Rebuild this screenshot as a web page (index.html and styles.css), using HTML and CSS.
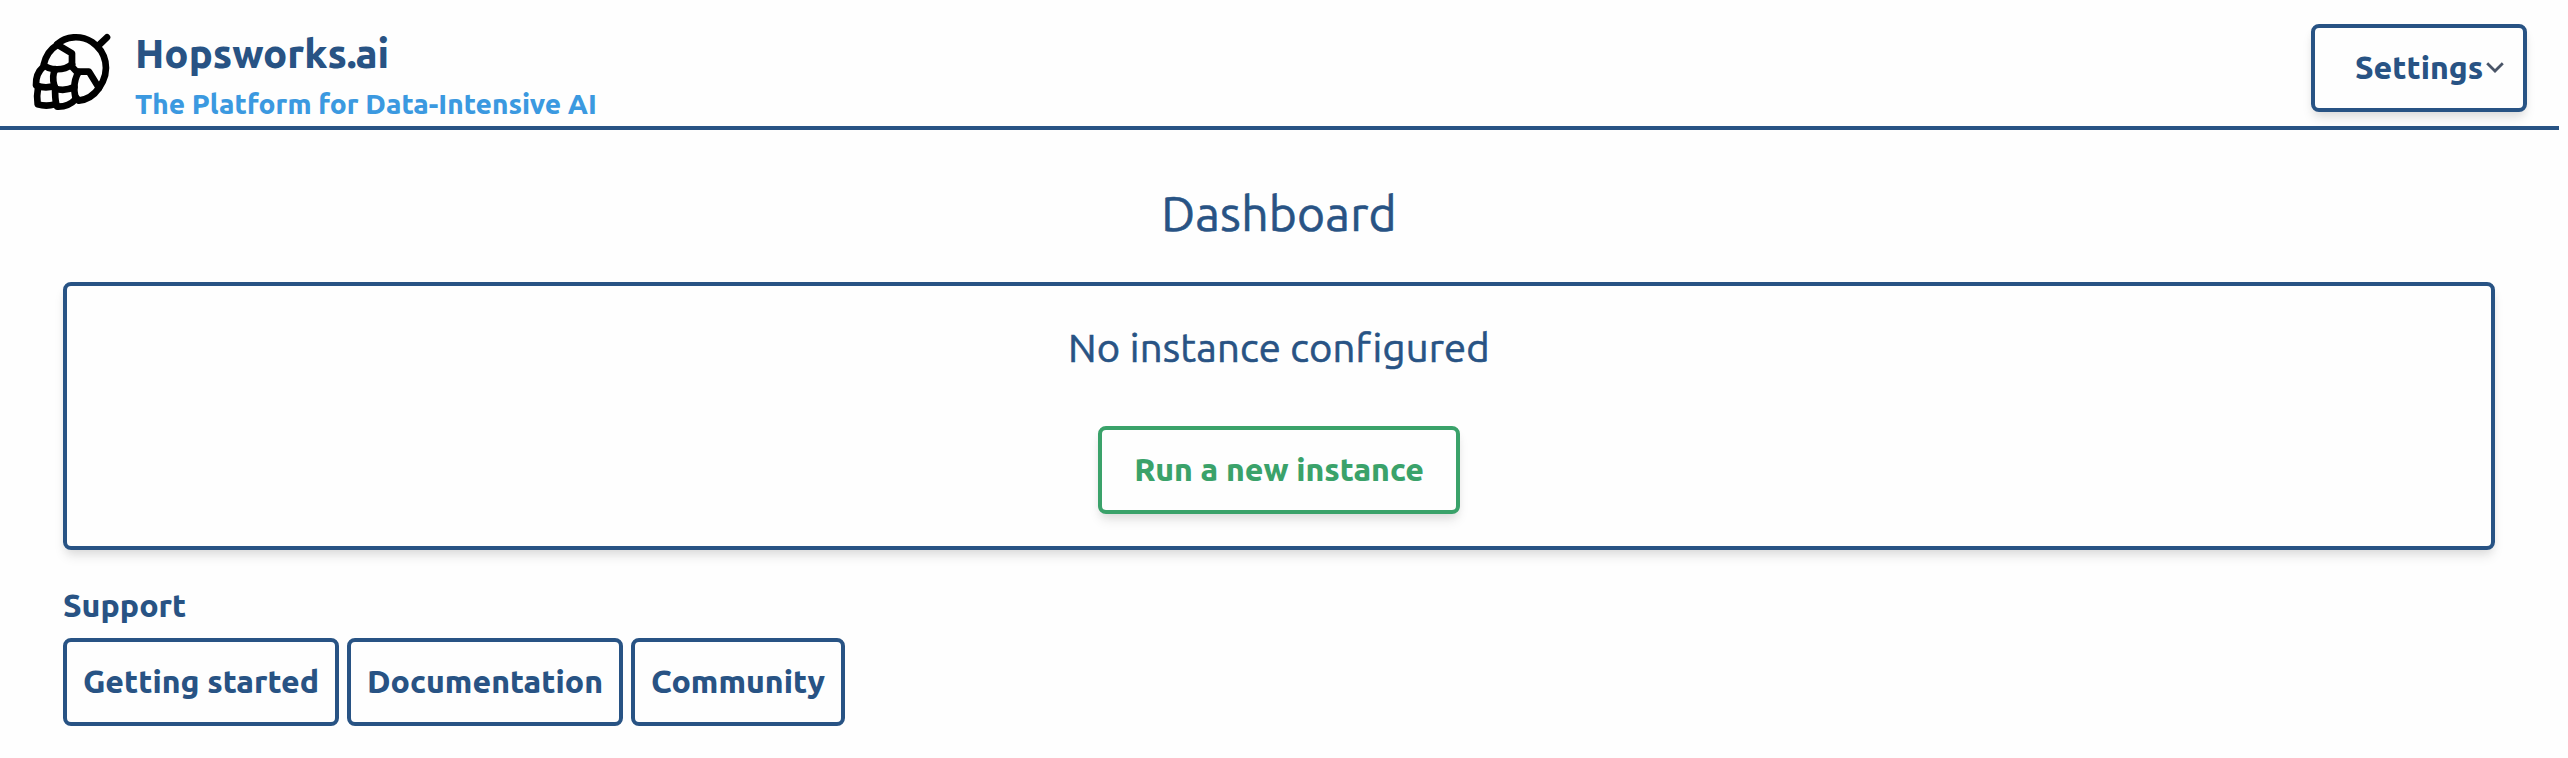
FILE: index.html
```html
<!DOCTYPE html>
<html lang="en">
<head>
<meta charset="utf-8">
<title>Hopsworks.ai</title>
<link rel="stylesheet" href="styles.css">
</head>
<body>
<div class="page">
  <header class="header">
    <div class="brand">
      <svg class="logo" viewBox="0 0 330 330" fill="none" stroke="#000" stroke-width="20" stroke-linecap="round" stroke-linejoin="round">
        <path d="M112 72C138 49 181 44 216 66C257 94 275 150 237 204"/>
        <path d="M234 78L261 52"/>
        <path d="M112 74L156 100L156 140L170 155L207 155L237 204C222 226 201 239 176 242L168 232"/>
        <path d="M110 76C90 88 77 108 71 134C85 150 129 155 156 133"/>
        <path d="M70 140C54 154 47 174 48 196C68 204 90 202 103 198C97 176 99 160 106 148"/>
        <path d="M54 204C50 224 51 240 53 253C70 258 88 258 104 253"/>
        <path d="M105 202C106 225 104 240 111 260C134 261 154 252 167 238C166 226 162 215 163 204C163 184 168 169 176 156"/>
        <path d="M105 206C128 213 147 209 163 201"/>
      </svg>
      <div>
        <div class="brand-name">Hopsworks.ai</div>
        <div class="brand-tagline">The Platform for Data-Intensive AI</div>
      </div>
    </div>
    <button class="button settings">Settings<svg class="chevron" viewBox="0 0 18 12" fill="none" stroke="#4a5568" stroke-width="2.8"><path d="M1.2 1.3L9 9L16.8 1.3"/></svg></button>
  </header>
  <main class="main">
    <h1 class="title">Dashboard</h1>
    <section class="panel">
      <p class="panel-text">No instance configured</p>
      <button class="button run">Run a new instance</button>
    </section>
    <h2 class="support-title">Support</h2>
    <nav class="links">
      <a class="button link">Getting started</a>
      <a class="button link">Documentation</a>
      <a class="button link community">Community</a>
    </nav>
  </main>
</div>
</body>
</html>
```
FILE: styles.css
```css
* { box-sizing: border-box; }
body {
  margin: 0;
  background: #fefefe;
  color: #285384;
  font-family: "Ubuntu Sans", Ubuntu, "Noto Sans", sans-serif;
  font-size: 32px;
  line-height: 48px;
}
h1, h2, p { margin: 0; }
.page { width: 2559px; }
.header {
  display: flex;
  justify-content: space-between;
  align-items: flex-start;
  height: 130px;
  padding: 24px 32px 0 20px;
  border-bottom: 4px solid #285384;
}
.brand { display: flex; gap: 5px; }
.logo { width: 110px; height: 110px; margin-top: -4px; }
.brand-name { font-size: 40px; font-weight: 800; line-height: 60px; }
.brand-tagline {
  font-size: 28px;
  font-weight: 800;
  line-height: 42px;
  color: #3b99e0;
  white-space: nowrap;
}
.button {
  display: flex;
  align-items: center;
  justify-content: center;
  height: 88px;
  padding: 0;
  border: 4px solid currentColor;
  border-radius: 8px;
  background: #fefefe;
  color: #285384;
  font: 800 32px/48px "Ubuntu Sans", Ubuntu, "Noto Sans", sans-serif;
  white-space: nowrap;
}
.settings, .run, .panel {
  box-shadow: 0 8px 12px -2px rgba(0, 0, 0, .1), 0 4px 8px -2px rgba(0, 0, 0, .06);
}
.settings { width: 216px; justify-content: flex-start; padding-left: 40px; }
.chevron { width: 18px; height: 12px; margin-left: 3px; }
.main { padding: 48px 64px 0 63px; }
.title, .panel-text {
  font-family: Ubuntu, "Noto Sans", sans-serif;
  font-weight: 400;
  letter-spacing: .2px;
  text-align: center;
  -webkit-text-stroke: .6px currentColor;
}
.title { font-size: 48px; line-height: 70px; }
.panel {
  display: flex;
  flex-direction: column;
  align-items: center;
  gap: 48px;
  height: 268px;
  margin-top: 34px;
  padding-top: 32px;
  border: 4px solid #285384;
  border-radius: 8px;
}
.panel-text { font-size: 40px; line-height: 60px; }
.run { width: 362px; color: #3aa26a; }
.support-title { margin-top: 32px; font-size: 32px; font-weight: 800; line-height: 48px; }
.links { display: flex; gap: 8px; margin-top: 8px; }
.link { width: 276px; }
.community { width: 214px; }
```
